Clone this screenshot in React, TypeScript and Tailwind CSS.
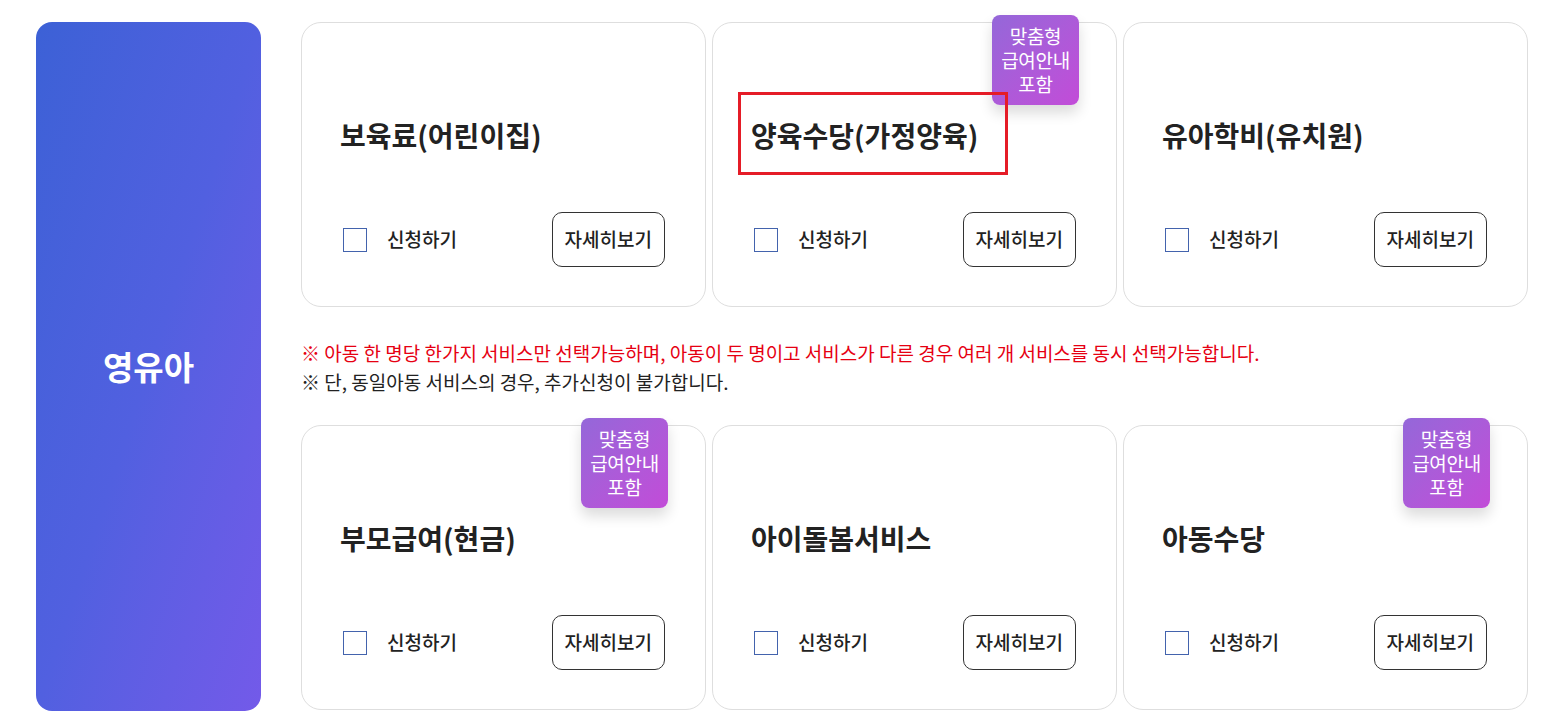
import React from "react";

type Service = {
  title: string;
  badge?: boolean;
  highlight?: boolean;
};

const topRow: Service[] = [
  { title: "보육료(어린이집)" },
  { title: "양육수당(가정양육)", badge: true, highlight: true },
  { title: "유아학비(유치원)" },
];

const bottomRow: Service[] = [
  { title: "부모급여(현금)", badge: true },
  { title: "아이돌봄서비스" },
  { title: "아동수당", badge: true },
];

const Badge = () => (
  <div className="absolute -top-[8px] right-[37px] w-[87px] h-[90px] rounded-[8px] bg-gradient-to-br from-[#9467d9] to-[#c24bd8] text-white text-[19px] leading-[24px] tracking-[-0.3px] flex flex-col items-center justify-center shadow-[0_8px_14px_rgba(0,0,0,0.14)]">
    <span>맞춤형</span>
    <span>급여안내</span>
    <span>포함</span>
  </div>
);

const ServiceCard = ({ item }: { item: Service }) => (
  <div className="relative h-[285px] rounded-[20px] border border-[#dedede] bg-white flex flex-col pl-[38px] pr-[40px] pt-[94px] pb-[39px]">
    {item.badge && <Badge />}
    {item.highlight && (
      <div className="absolute left-[25px] top-[69px] w-[270px] h-[83px] border-[3px] border-[#e51c27]" />
    )}
    <h3 className="text-[28px] leading-[36px] font-bold text-[#222]">{item.title}</h3>
    <div className="mt-auto h-[55px] flex items-center justify-between">
      <label className="flex items-center gap-[20px] pl-[3px] cursor-pointer">
        <span className="w-[24px] h-[24px] border-[1.5px] border-[#4363ad] bg-white" />
        <span className="text-[19px] font-medium text-[#222]">신청하기</span>
      </label>
      <button className="h-[55px] px-[12px] rounded-[10px] border border-[#333] bg-white text-[19px] font-medium text-[#222]">
        자세히보기
      </button>
    </div>
  </div>
);

export default function App() {
  return (
    <div
      className="min-h-screen bg-white flex gap-[40px] pl-[36px] pt-[22px]"
      style={{ fontFamily: '"Noto Sans CJK KR", "Noto Sans", sans-serif' }}
    >
      {/* 왼쪽 구분 패널 */}
      <div className="w-[225px] h-[689px] rounded-[16px] bg-gradient-to-br from-[#3c61d6] via-[#5160e0] to-[#735ae9] flex items-center justify-center">
        <span className="text-white text-[33px] font-bold">영유아</span>
      </div>

      {/* 서비스 카드 */}
      <div className="w-[1227px]">
        <div className="grid grid-cols-3 gap-[6px]">
          {topRow.map((s) => (
            <ServiceCard key={s.title} item={s} />
          ))}
        </div>

        <div className="pt-[31px] pb-[29px] text-[19px] leading-[29px]">
          <p className="text-[#e60012]">
            ※ 아동 한 명당 한가지 서비스만 선택가능하며, 아동이 두 명이고 서비스가 다른 경우 여러 개 서비스를 동시 선택가능합니다.
          </p>
          <p className="text-[#222]">※ 단, 동일아동 서비스의 경우, 추가신청이 불가합니다.</p>
        </div>

        <div className="grid grid-cols-3 gap-[6px]">
          {bottomRow.map((s) => (
            <ServiceCard key={s.title} item={s} />
          ))}
        </div>
      </div>
    </div>
  );
}
